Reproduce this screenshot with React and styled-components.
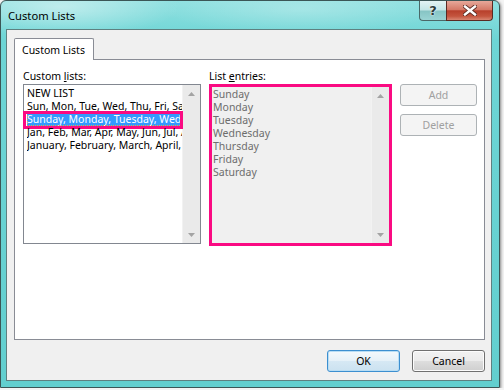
import styled, { createGlobalStyle } from "styled-components";

const FONT = `"Noto Sans", "Open Sans", sans-serif`;

const GlobalStyle = createGlobalStyle`
  html, body {
    margin: 0;
    padding: 0;
    background: #f4f4f4;
  }
  body {
    font-family: ${FONT};
    font-size: 10.5px;
  }
`;

const customLists = [
  "NEW LIST",
  "Sun, Mon, Tue, Wed, Thu, Fri, Sat",
  "Sunday, Monday, Tuesday, Wednesday, Thursday, Friday, Saturday",
  "Jan, Feb, Mar, Apr, May, Jun, Jul, Aug, Sep, Oct, Nov, Dec",
  "January, February, March, April, May, June, July",
];

const entries = ["Sunday", "Monday", "Tuesday", "Wednesday", "Thursday", "Friday", "Saturday"];

const Arrow = ({ down }) => (
  <svg width="7" height="4" viewBox="0 0 7 4">
    <path d={down ? "M0 0H7L3.5 4Z" : "M0 4H7L3.5 0Z"} fill="#a3a3a3" />
  </svg>
);

const Scrollbar = () => (
  <ScrollTrack>
    <ScrollArrow>
      <Arrow />
    </ScrollArrow>
    <ScrollArrow>
      <Arrow down />
    </ScrollArrow>
  </ScrollTrack>
);

const App = () => {
  return (
    <>
      <GlobalStyle />
      <Window>
        <TitleBar>
          <Title>Custom Lists</Title>
          <Controls>
            <HelpButton>?</HelpButton>
            <CloseButton>
              <svg width="14" height="11" viewBox="0 0 14 11">
                <path
                  d="M2 1.5L12 9.5M12 1.5L2 9.5"
                  stroke="#5a2a22"
                  strokeWidth="4.2"
                  strokeLinecap="square"
                />
                <path
                  d="M2 1.5L12 9.5M12 1.5L2 9.5"
                  stroke="#ffffff"
                  strokeWidth="2.4"
                  strokeLinecap="square"
                />
              </svg>
            </CloseButton>
          </Controls>
        </TitleBar>
        <Client>
          <Tabs>
            <Tab>Custom Lists</Tab>
          </Tabs>
          <Panel>
            <Column>
              <Label>
                Custom <u>l</u>ists:
              </Label>
              <ListBox>
                <ListItems>
                  {customLists.map((item, i) => (
                    <ListItem key={item} selected={i === 2}>
                      <ItemText>{item}</ItemText>
                      {i === 2 && <Highlight />}
                    </ListItem>
                  ))}
                </ListItems>
                <Scrollbar />
              </ListBox>
            </Column>
            <Column>
              <Label>
                List <u>e</u>ntries:
              </Label>
              <EntriesBox>
                <ListItems>
                  {entries.map((item) => (
                    <EntryItem key={item}>{item}</EntryItem>
                  ))}
                </ListItems>
                <Scrollbar />
              </EntriesBox>
            </Column>
            <SideButtons>
              <PanelButton disabled>Add</PanelButton>
              <PanelButton disabled>Delete</PanelButton>
            </SideButtons>
          </Panel>
          <Footer>
            <DialogButton primary>OK</DialogButton>
            <DialogButton>Cancel</DialogButton>
          </Footer>
        </Client>
      </Window>
    </>
  );
};

const Window = styled.div`
  width: 500px;
  height: 388px;
  box-sizing: border-box;
  display: flex;
  flex-direction: column;
  padding: 0 7px 6px 5px;
  border: 1px solid #3b5656;
  border-radius: 6px 6px 0 0;
  background:
    radial-gradient(ellipse 120px 30px at 60px 6px, rgba(255, 255, 255, 0.45), transparent),
    radial-gradient(ellipse 140px 26px at 300px 8px, rgba(255, 255, 255, 0.25), transparent),
    linear-gradient(180deg, #8fe0e0 0%, #6dd5d5 10%, #62cfcf 100%);
  box-shadow: 1px 1px 3px rgba(0, 0, 0, 0.45);
`;

const TitleBar = styled.div`
  height: 28px;
  display: flex;
  justify-content: space-between;
  align-items: flex-start;
`;

const Title = styled.span`
  margin: 8px 0 0 2px;
  font-size: 11.2px;
  line-height: 14px;
  color: #000;
`;

const Controls = styled.div`
  display: flex;
  margin-right: -1px;
`;

const HelpButton = styled.div`
  width: 27px;
  height: 20px;
  box-sizing: border-box;
  display: flex;
  align-items: center;
  justify-content: center;
  border: 1px solid #4a6868;
  border-top: none;
  border-right: none;
  border-radius: 0 0 0 4px;
  background: linear-gradient(180deg, #e4f4f4 0%, #c4e6e6 48%, #86c4c4 52%, #9ad4d4 100%);
  font-family: "DejaVu Sans", sans-serif;
  font-weight: bold;
  font-size: 13px;
  color: #2c3c3c;
  text-shadow: 0 0 2px #fff, 0 0 1px #fff;
`;

const CloseButton = styled.div`
  width: 47px;
  height: 20px;
  box-sizing: border-box;
  display: flex;
  align-items: center;
  justify-content: center;
  border: 1px solid #5a2a22;
  border-top: none;
  border-radius: 0 0 4px 0;
  background: linear-gradient(180deg, #e6a89a 0%, #d47a68 45%, #b8402c 52%, #c4553e 80%, #d88672 100%);
`;

const Client = styled.div`
  flex: 1;
  display: flex;
  flex-direction: column;
  padding: 8px 6px 8px 7px;
  border: 1px solid #5e8080;
  background: #f0f0f0;
`;

const Tabs = styled.div`
  display: flex;
  height: 21px;
`;

const Tab = styled.div`
  position: relative;
  z-index: 1;
  width: 80px;
  height: 22px;
  box-sizing: border-box;
  padding: 4px 0 0 7px;
  border: 1px solid #898c95;
  border-bottom: none;
  border-radius: 2px 2px 0 0;
  background: #fff;
  color: #000;
  line-height: 14px;
`;

const Panel = styled.div`
  flex: 1;
  display: grid;
  grid-template-columns: 178px 183px 77px;
  column-gap: 8px;
  align-items: start;
  padding: 10px 0 0 8px;
  border: 1px solid #898c95;
  background: #fff;
`;

const Column = styled.div`
  display: flex;
  flex-direction: column;
`;

const Label = styled.div`
  height: 14px;
  line-height: 13px;
  color: #000;
  white-space: nowrap;

  u {
    text-decoration-thickness: 1px;
    text-underline-offset: 1px;
  }
`;

const ListBox = styled.div`
  display: flex;
  height: 160px;
  box-sizing: border-box;
  border: 1px solid #828790;
  background: #fff;
`;

const EntriesBox = styled(ListBox)`
  height: 162px;
  border: 3px solid #fa0a82;
  background: #f0f0f0;
`;

const ListItems = styled.div`
  flex: 1;
  min-width: 0;
  padding: 2px 0 0 3px;
  ${EntriesBox} & {
    padding: 1px 0 0 1px;
  }
`;

const ListItem = styled.div`
  position: relative;
  height: 13px;
  line-height: 13px;
  color: ${(p) => (p.selected ? "#fff" : "#000")};
  background: ${(p) => (p.selected ? "#3399ff" : "transparent")};
  outline: ${(p) => (p.selected ? "1px dotted #e8a24a" : "none")};
  outline-offset: -1px;
`;

const ItemText = styled.div`
  overflow: hidden;
  white-space: nowrap;
`;

const Highlight = styled.span`
  position: absolute;
  left: -4px;
  right: -1px;
  top: -2px;
  bottom: -3px;
  border: 3px solid #fa0a82;
`;

const EntryItem = styled.div`
  height: 13px;
  line-height: 13px;
  white-space: nowrap;
  color: #6d6d6d;
`;

const ScrollTrack = styled.div`
  width: 17px;
  flex-shrink: 0;
  display: flex;
  flex-direction: column;
  justify-content: space-between;
  border-left: 1px solid #f2f2f2;
  background: #eaeaea;
`;

const ScrollArrow = styled.div`
  height: 17px;
  display: flex;
  align-items: center;
  justify-content: center;
`;

const SideButtons = styled.div`
  display: flex;
  flex-direction: column;
  gap: 8px;
  padding-top: 14px;
`;

const PanelButton = styled.button`
  height: 22px;
  padding: 0;
  border: 1px solid #adb2b5;
  border-radius: 3px;
  background: #f4f4f4;
  font-family: ${FONT};
  font-size: 10.5px;
  color: #a0a0a0;
`;

const Footer = styled.div`
  display: flex;
  justify-content: flex-end;
  gap: 12px;
  margin-top: 10px;
`;

const DialogButton = styled.button`
  width: 73px;
  height: 22px;
  padding: 0;
  border: 1px solid ${(p) => (p.primary ? "#3c8fd0" : "#707070")};
  border-radius: 3px;
  background: ${(p) =>
    p.primary
      ? "linear-gradient(180deg, #f4f9fc 0%, #e6f1f8 48%, #d6e8f4 52%, #cbe2f0 100%)"
      : "linear-gradient(180deg, #f2f2f2 0%, #ebebeb 48%, #dddddd 52%, #cfcfcf 100%)"};
  box-shadow: inset 0 0 0 1px ${(p) => (p.primary ? "#b8ddf4" : "#fcfcfc")};
  font-family: ${FONT};
  font-size: 10.5px;
  color: #000;
`;

export default App;
